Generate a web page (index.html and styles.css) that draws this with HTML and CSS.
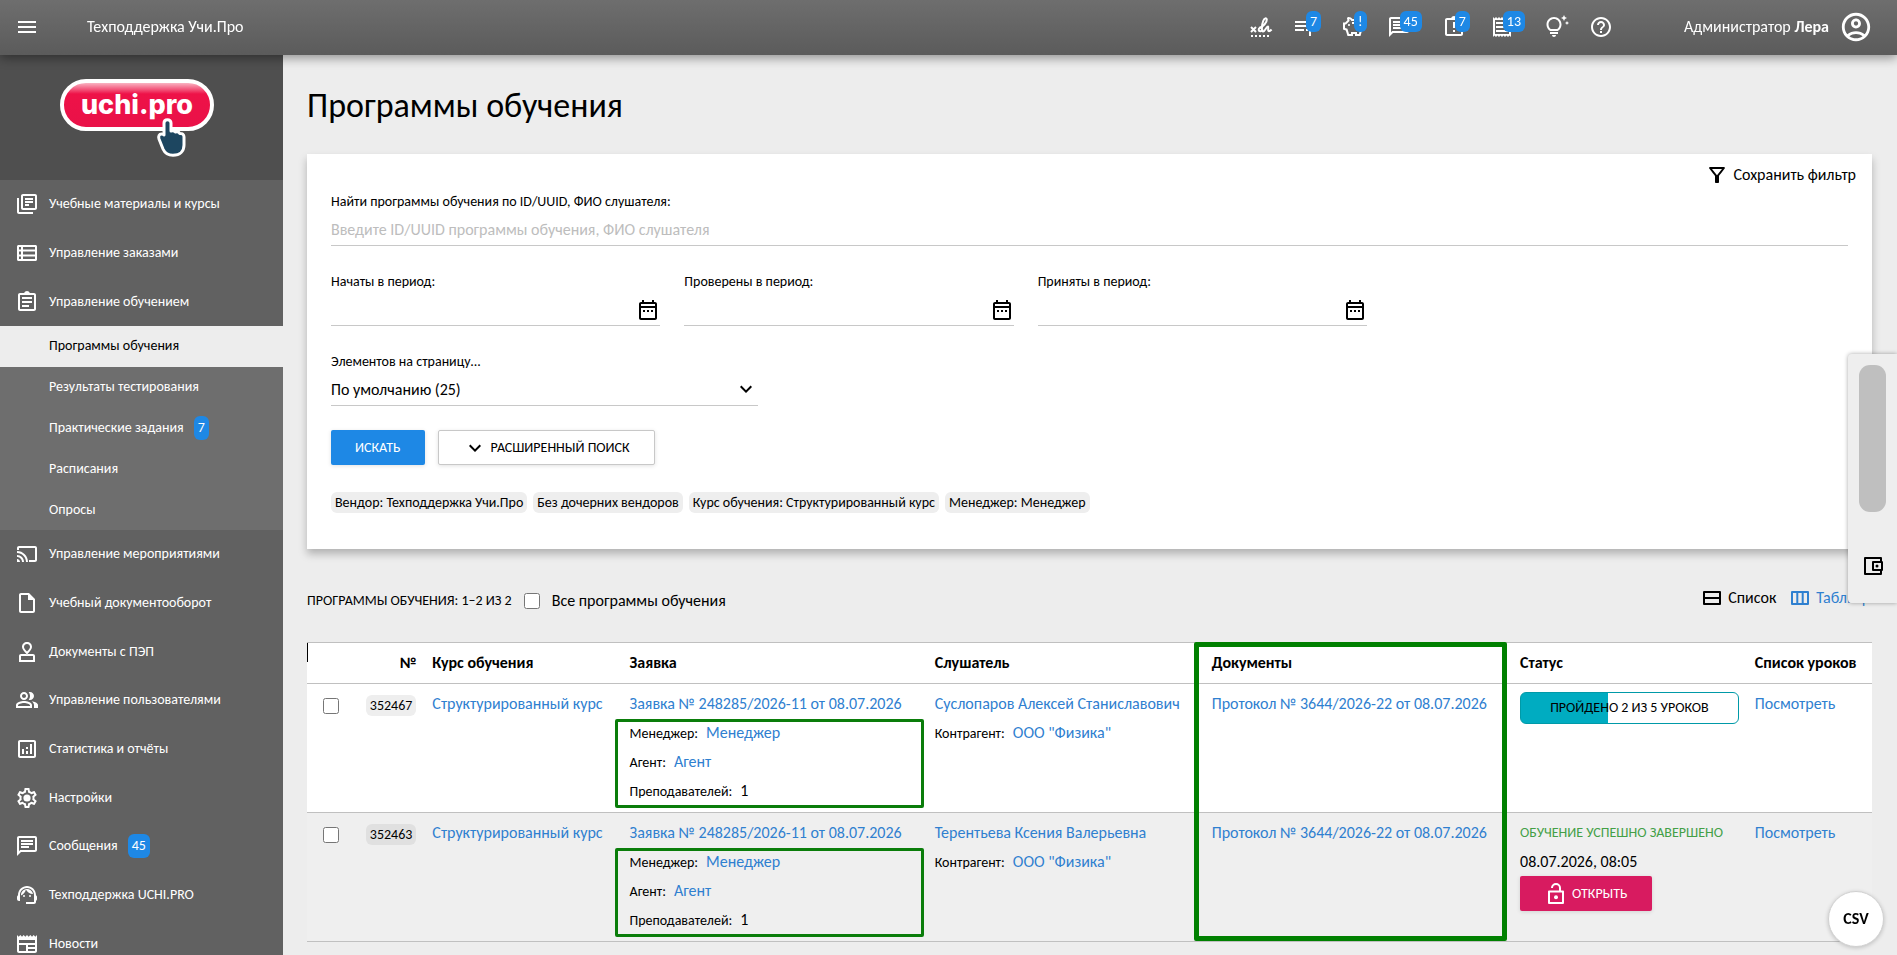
FILE: index.html
```html
<!DOCTYPE html>
<html lang="ru">
  <head>
    <meta charset="UTF-8">
    <meta name="viewport" content="width=device-width, initial-scale=1">
    <title>Программы обучения</title>
    <link rel="stylesheet" href="styles.css">
  </head>
  <body>
    <!-- Набор иконок -->
    <svg class="sprite" aria-hidden="true">
      <symbol id="i-menu" viewBox="0 0 24 24"><path d="M3 18h18v-2H3v2zm0-5h18v-2H3v2zm0-7v2h18V6H3z"/></symbol>
      <symbol id="i-books" viewBox="0 0 24 24"><path d="M4 6H2v14c0 1.1.9 2 2 2h14v-2H4V6zm16-4H8c-1.1 0-2 .9-2 2v12c0 1.1.9 2 2 2h12c1.1 0 2-.9 2-2V4c0-1.1-.9-2-2-2zm0 14H8V4h12v12zM10 9h8v2h-8zm0 3h4v2h-4zm0-6h8v2h-8z"/></symbol>
      <symbol id="i-list" viewBox="0 0 24 24"><path d="M3.500 4h17c.8 0 1.500.7 1.500 1.500v13c0 .8-.7 1.500-1.500 1.500h-17c-.8 0-1.500-.7-1.500-1.500v-13C2 4.700 2.700 4 3.500 4zM4 6v2.500h2V6H4zm4 0v2.500h12V6H8zm-4 4.500v3h2v-3H4zm4 0v3h12v-3H8zm-4 5V18h2v-2.500H4zm4 0V18h12v-2.500H8z" fill-rule="evenodd"/></symbol>
      <symbol id="i-assignment" viewBox="0 0 24 24"><path fill-rule="evenodd" d="M7 15h7v2H7zm0-4h10v2H7zm0-4h10v2H7zm12-4h-4.180C14.400 1.840 13.300 1 12 1c-1.300 0-2.400.84-2.820 2H5c-1.100 0-2 .9-2 2v14c0 1.100.9 2 2 2h14c1.100 0 2-.9 2-2V5c0-1.100-.9-2-2-2zm0 16H5V5h14v14z"/></symbol>
      <symbol id="i-late" viewBox="0 0 24 24"><path fill-rule="evenodd" d="M11 15h2v2h-2zm0-8h2v6h-2zm8-4h-4.180C14.400 1.840 13.300 1 12 1c-1.300 0-2.400.84-2.820 2H5c-1.100 0-2 .9-2 2v14c0 1.100.9 2 2 2h14c1.100 0 2-.9 2-2V5c0-1.100-.9-2-2-2zm0 16H5V5h14v14z"/></symbol>
      <symbol id="i-cast" viewBox="0 0 24 24"><path d="M20 4H4c-1.100 0-2 .9-2 2v2h2V6h16v12h-6v2h6c1.100 0 2-.9 2-2V6c0-1.100-.9-2-2-2zM2 17v3h3c0-1.660-1.340-3-3-3zm0-4v2c2.760 0 5 2.240 5 5h2c0-3.870-3.130-7-7-7zm0-4v2c4.970 0 9 4.030 9 9h2c0-6.080-4.920-11-11-11z"/></symbol>
      <symbol id="i-file" viewBox="0 0 24 24"><path d="M14 2H6c-1.100 0-1.990.9-1.990 2L4 20c0 1.100.89 2 1.990 2H18c1.100 0 2-.9 2-2V8l-6-6zM6 20V4h7v5h5v11H6z"/></symbol>
      <symbol id="i-stamp" viewBox="0 0 24 24"><path fill-rule="evenodd" d="M6 14h12c1.100 0 2 .9 2 2v6H4v-6c0-1.100.9-2 2-2zm0 2v4h12v-4H6zM12 2c2.800 0 5 2.100 5 4.900 0 2-1.900 4.300-5 7.600-3.100-3.300-5-5.600-5-7.600C7 4.100 9.200 2 12 2zm0 2c-1.700 0-3 1.300-3 2.900 0 1.100 1.100 2.700 3 4.700 1.900-2 3-3.600 3-4.700C15 5.300 13.700 4 12 4z"/></symbol>
      <symbol id="i-people" viewBox="0 0 24 24"><path d="M16.670 13.130C18.040 14.060 19 15.320 19 17v3h4v-3c0-2.180-3.570-3.470-6.330-3.870zM15 12c2.210 0 4-1.790 4-4s-1.790-4-4-4c-.47 0-.91.1-1.330.24C14.500 5.270 15 6.580 15 8s-.5 2.730-1.330 3.760c.42.14.86.24 1.330.24zM9 12c2.210 0 4-1.790 4-4s-1.790-4-4-4-4 1.790-4 4 1.790 4 4 4zm0-6c1.100 0 2 .9 2 2s-.9 2-2 2-2-.9-2-2 .9-2 2-2zM9 13c-2.670 0-8 1.340-8 4v3h16v-3c0-2.660-5.330-4-8-4zm6 5H3v-.99C3.200 16.290 6.300 15 9 15s5.800 1.290 6 2v1z"/></symbol>
      <symbol id="i-chart" viewBox="0 0 24 24"><path d="M19 3H5c-1.100 0-2 .9-2 2v14c0 1.100.9 2 2 2h14c1.100 0 2-.9 2-2V5c0-1.100-.9-2-2-2zm0 16H5V5h14v14zM7 12h2v5H7zm8-5h2v10h-2zm-4 7h2v3h-2zm0-4h2v2h-2z"/></symbol>
      <symbol id="i-settings" viewBox="0 0 24 24"><path d="M19.43 12.98c.04-.32.07-.64.07-.98s-.03-.66-.07-.98l2.11-1.65c.19-.15.24-.42.12-.64l-2-3.46c-.09-.16-.26-.25-.44-.25-.06 0-.12.01-.17.03l-2.49 1c-.52-.4-1.08-.73-1.69-.98l-.38-2.65C14.46 2.18 14.25 2 14 2h-4c-.25 0-.46.18-.49.42l-.38 2.65c-.61.25-1.17.59-1.69.98l-2.49-1c-.06-.02-.12-.03-.18-.03-.17 0-.34.09-.43.25l-2 3.46c-.13.22-.07.49.12.64l2.11 1.65c-.04.32-.07.65-.07.98s.03.66.07.98l-2.11 1.65c-.19.15-.24.42-.12.64l2 3.46c.09.16.26.25.44.25.06 0 .12-.01.17-.03l2.49-1c.52.4 1.08.73 1.69.98l.38 2.65c.03.24.24.42.49.42h4c.25 0 .46-.18.49-.42l.38-2.65c.61-.25 1.17-.59 1.69-.98l2.49 1c.06.02.12.03.18.03.17 0 .34-.09.43-.25l2-3.46c.12-.22.07-.49-.12-.64l-2.11-1.65zm-1.98-1.71c.04.31.05.52.05.73s-.02.43-.05.73l-.14 1.13.89.7 1.08.84-.7 1.21-1.27-.51-1.04-.42-.9.68c-.43.32-.84.56-1.25.73l-1.06.43-.16 1.13-.2 1.35h-1.4l-.19-1.35-.16-1.13-1.06-.43c-.43-.18-.83-.41-1.23-.71l-.91-.7-1.06.43-1.27.51-.7-1.21 1.08-.84.89-.7-.14-1.13c-.03-.31-.05-.54-.05-.74s.02-.43.05-.73l.14-1.13-.89-.7-1.08-.84.7-1.21 1.27.51 1.04.42.9-.68c.43-.32.84-.56 1.25-.73l1.06-.43.16-1.13.2-1.35h1.39l.19 1.35.16 1.13 1.06.43c.43.18.83.41 1.23.71l.91.7 1.06-.43 1.27-.51.7 1.21-1.07.85-.89.7.14 1.13z"/><circle cx="12" cy="12" r="3.600"/></symbol>
      <symbol id="i-chat" viewBox="0 0 24 24"><path d="M4 4h16v12H5.170L4 17.170V4m0-2c-1.100 0-1.990.9-1.990 2L2 22l4-4h14c1.100 0 2-.9 2-2V4c0-1.100-.9-2-2-2H4zm2 10h8v2H6v-2zm0-3h12v2H6V9zm0-3h12v2H6V6z"/></symbol>
      <symbol id="i-support" viewBox="0 0 24 24"><path d="M21 12.220C21 6.730 16.740 3 12 3c-4.690 0-9 3.650-9 9.280-.6.34-1 .98-1 1.720v2c0 1.100.9 2 2 2h1v-6.100c0-3.870 3.130-7 7-7s7 3.130 7 7V19h-8v2h8c1.100 0 2-.9 2-2v-1.220c.59-.31 1-.92 1-1.640v-2.300c0-.7-.41-1.310-1-1.620z"/><circle cx="9" cy="13" r="1"/><circle cx="15" cy="13" r="1"/><path d="M18 11.030C17.520 8.180 15.040 6 12.050 6c-3.030 0-6.290 2.510-6.030 6.450 2.470-1.010 4.330-3.210 4.860-5.890 1.310 2.630 4 4.440 7.120 4.470z"/></symbol>
      <symbol id="i-news" viewBox="0 0 24 24"><path d="M22 3l-1.670 1.670L18.670 3 17 4.670 15.330 3l-1.660 1.670L12 3l-1.670 1.670L8.670 3 7 4.670 5.330 3 3.670 4.670 2 3v16c0 1.100.9 2 2 2h16c1.100 0 2-.9 2-2V3zM11 19H4v-6h7v6zm9 0h-7v-2h7v2zm0-4h-7v-2h7v2zm0-4H4V8h16v3z"/></symbol>
      <symbol id="i-sign" viewBox="0 0 24 24"><g fill="none" stroke="currentColor" stroke-width="2"><path d="M2 12l5 5M7 12l-5 5"/><path d="M10 13c4-1 8-5.500 7.800-8.500-.2-2-2.500-1.500-3.600 1.500-1.400 3.800-2.200 10-.2 10.500 2 .3 3.500-5.500 5-5 1 .4-.8 4.800 1 4.800 1 0 1.800-.9 2.600-1.800"/><path d="M14 12.500c-2-.6-4.500.7-4.300 2.500.3 2 3.300 1.500 4.300-.5"/><path d="M2 21h20" stroke-dasharray="2 2"/></g></symbol>
      <symbol id="i-playlist" viewBox="0 0 24 24"><path d="M14 10H2v2h12v-2zm0-4H2v2h12V6zm4 8v-4h-2v4h-3v2h3v5h2v-5h4v-2h-4zM2 16h9v-2H2v2z"/></symbol>
      <symbol id="i-savings" viewBox="0 0 24 24"><path transform="matrix(-1 0 0 1 24 0)" d="M15 10c0-.55.45-1 1-1s1 .45 1 1-.45 1-1 1-1-.45-1-1zM8 9h5V7H8v2zm14-1.500v6.970l-2.820.94L17.500 21H12v-2h-2v2H4.500S2 12.540 2 9.500 4.460 4 7.500 4h5c.91-1.210 2.360-2 4-2 .83 0 1.500.67 1.500 1.500 0 .21-.04.4-.12.58-.14.34-.26.73-.32 1.150l2.270 2.270H22zm-2 2h-1L15.500 6c0-.65.09-1.290.26-1.910-.97.25-1.760.97-2.090 1.910H7.500C5.570 6 4 7.570 4 9.500c0 1.880 1.220 6.650 2.010 9.500H8v-2h6v2h2.010l1.550-5.150 2.440-.82V9.500z"/></symbol>
      <symbol id="i-receipt" viewBox="0 0 24 24"><path d="M19.500 3.500L18 2l-1.500 1.500L15 2l-1.500 1.500L12 2l-1.500 1.500L9 2 7.500 3.500 6 2 4.500 3.500 3 2v20l1.500-1.500L6 22l1.500-1.500L9 22l1.500-1.500L12 22l1.500-1.500L15 22l1.500-1.500L18 22l1.500-1.500L21 22V2l-1.500 1.500zM19 19.090H5V4.910h14v14.180zM6 15h12v2H6zm0-4h12v2H6zm0-4h12v2H6z"/></symbol>
      <symbol id="i-tips" viewBox="0 0 24 24"><path d="M7 20h4c0 1.100-.9 2-2 2s-2-.9-2-2zm-2-1h8v-2H5v2zm11.500-9.500c0 3.820-2.660 5.860-3.770 6.500H5.270C4.160 15.360 1.500 13.320 1.500 9.500 1.500 5.360 4.860 2 9 2s7.500 3.360 7.500 7.500zm-2 0C14.500 6.470 12.030 4 9 4S3.500 6.470 3.500 9.500c0 2.470 1.490 3.890 2.350 4.500h6.300c.86-.61 2.350-2.030 2.350-4.500zm6.870-2.130L20 8l1.370.63L22 10l.63-1.370L24 8l-1.370-.63L22 6l-.63 1.370zM19 6l.94-2.060L22 3l-2.060-.94L19 0l-.94 2.060L16 3l2.060.94L19 6z"/></symbol>
      <symbol id="i-help" viewBox="0 0 24 24"><path d="M11 18h2v-2h-2v2zm1-16C6.480 2 2 6.480 2 12s4.480 10 10 10 10-4.480 10-10S17.520 2 12 2zm0 18c-4.410 0-8-3.590-8-8s3.590-8 8-8 8 3.590 8 8-3.590 8-8 8zm0-14c-2.210 0-4 1.790-4 4h2c0-1.100.9-2 2-2s2 .9 2 2c0 2-3 1.750-3 5h2c0-2.250 3-2.500 3-5 0-2.210-1.790-4-4-4z"/></symbol>
      <symbol id="i-account" viewBox="0 0 24 24"><path d="M12 2C6.480 2 2 6.480 2 12s4.480 10 10 10 10-4.480 10-10S17.520 2 12 2zM7.350 18.500C8.660 17.560 10.260 17 12 17s3.340.56 4.650 1.500C15.340 19.440 13.740 20 12 20s-3.340-.56-4.650-1.500zm10.790-1.380C16.450 15.800 14.320 15 12 15s-4.450.8-6.140 2.120C4.700 15.730 4 13.950 4 12c0-4.420 3.580-8 8-8s8 3.580 8 8c0 1.950-.7 3.730-1.860 5.120zM12 6c-1.930 0-3.500 1.570-3.500 3.500S10.070 13 12 13s3.500-1.570 3.500-3.500S13.930 6 12 6zm0 5c-.83 0-1.500-.67-1.500-1.500S11.170 8 12 8s1.500.67 1.500 1.500S12.830 11 12 11z"/></symbol>
      <symbol id="i-filter" viewBox="0 0 24 24"><path d="M7 6h10l-5.010 6.300L7 6zm-2.750-.39C6.270 8.200 10 13 10 13v6c0 .55.45 1 1 1h2c.55 0 1-.45 1-1v-6s3.720-4.800 5.740-7.390c.51-.66.04-1.610-.79-1.610H5.040c-.83 0-1.300.95-.79 1.610z"/></symbol>
      <symbol id="i-calendar" viewBox="0 0 24 24"><path d="M7 12h2v2H7v-2zm14-6v14c0 1.100-.9 2-2 2H5c-1.110 0-2-.9-2-2l.01-14c0-1.100.88-2 1.990-2h1V2h2v2h8V2h2v2h1c1.100 0 2 .9 2 2zM5 8h14V6H5v2zm14 12V10H5v10h14zm-4-6h2v-2h-2v2zm-4 0h2v-2h-2v2z"/></symbol>
      <symbol id="i-down" viewBox="0 0 24 24"><path d="M16.590 8.590L12 13.170 7.410 8.590 6 10l6 6 6-6z"/></symbol>
      <symbol id="i-rows" viewBox="0 0 24 24"><path fill="none" stroke="currentColor" stroke-width="2" stroke-linejoin="round" d="M4 6h16v12H4zM4 12h16"/></symbol>
      <symbol id="i-columns" viewBox="0 0 24 24"><path fill="none" stroke="currentColor" stroke-width="2" stroke-linejoin="round" d="M4 6h16v12H4zM9.300 6v12M14.700 6v12"/></symbol>
      <symbol id="i-wallet" viewBox="0 0 24 24"><path fill="none" stroke="currentColor" stroke-width="2" stroke-linejoin="round" d="M20 8V4H4v16h16v-4M12 8h9v8h-9z"/><circle cx="16" cy="12" r="1.500"/></symbol>
      <symbol id="i-unlock" viewBox="0 0 24 24"><path fill="none" stroke="currentColor" stroke-width="2" stroke-linejoin="round" d="M5 9.500h14V21H5zM8 6c0-2.200 1.800-4 4-4s4 1.800 4 4v3.500"/><circle cx="12" cy="15.300" r="2"/></symbol>
    </svg>

    <header class="topbar">
      <button class="icon-button" aria-label="Меню"><svg class="icon"><use href="#i-menu"/></svg></button>
      <span class="topbar-title">Техподдержка Учи.Про</span>
      <nav class="topbar-actions" aria-label="Уведомления">
        <button class="icon-button" aria-label="Подписи"><svg class="icon"><use href="#i-sign"/></svg></button>
        <button class="icon-button" aria-label="Заявки"><svg class="icon"><use href="#i-playlist"/></svg><span class="badge">7</span></button>
        <button class="icon-button" aria-label="Баланс"><svg class="icon"><use href="#i-savings"/></svg><span class="badge">!</span></button>
        <button class="icon-button" aria-label="Сообщения"><svg class="icon"><use href="#i-chat"/></svg><span class="badge">45</span></button>
        <button class="icon-button" aria-label="Задания"><svg class="icon"><use href="#i-late"/></svg><span class="badge">7</span></button>
        <button class="icon-button" aria-label="Счета"><svg class="icon"><use href="#i-receipt"/></svg><span class="badge">13</span></button>
        <button class="icon-button" aria-label="Советы"><svg class="icon"><use href="#i-tips"/></svg></button>
        <button class="icon-button" aria-label="Помощь"><svg class="icon"><use href="#i-help"/></svg></button>
      </nav>
      <button class="profile">
        <span>Администратор <b>Лера</b></span>
        <svg class="icon icon-large"><use href="#i-account"/></svg>
      </button>
    </header>

    <div class="layout">
      <aside class="sidebar">
        <a class="logo" href="#">
          <svg width="154" height="78" viewBox="0 0 154 78" role="img" aria-label="uchi.pro">
            <defs>
              <linearGradient id="pill" x1="0" y1="0" x2="0" y2="1">
                <stop offset="0" stop-color="#fbd0d8"/>
                <stop offset=".27" stop-color="#ee1248"/>
                <stop offset="1" stop-color="#e91148"/>
              </linearGradient>
            </defs>
            <rect x="2" y="2" width="150" height="48" rx="24" fill="url(#pill)" stroke="#fff" stroke-width="4"/>
            <text class="logo-text" x="77" y="35" text-anchor="middle">uchi.pro</text>
            <path d="M104 44c0-2 1.500-3.200 3.500-3.200s3.500 1.400 3.500 3.200v8c2-.6 3.600 0 4.500 1 2-.6 3.500 0 4.300 1.400 2.400-.2 4.200 1 4.200 3.600v8c0 6-4 10.300-11 10.300-5 0-8-1.800-10-6.300l-4-10c-1-3 .4-5 2.400-5s2.600 1 2.600 1z" fill="#1d4660" stroke="#fff" stroke-width="3" stroke-linejoin="round"/>
          </svg>
        </a>
        <nav>
          <ul class="menu">
            <li><a href="#"><svg class="icon"><use href="#i-books"/></svg>Учебные материалы и курсы</a></li>
            <li><a href="#"><svg class="icon"><use href="#i-list"/></svg>Управление заказами</a></li>
            <li><a href="#"><svg class="icon"><use href="#i-assignment"/></svg>Управление обучением</a></li>
          </ul>
          <ul class="submenu">
            <li><a class="active" href="#">Программы обучения</a></li>
            <li><a href="#">Результаты тестирования</a></li>
            <li><a href="#">Практические задания<span class="badge badge-menu">7</span></a></li>
            <li><a href="#">Расписания</a></li>
            <li><a href="#">Опросы</a></li>
          </ul>
          <ul class="menu">
            <li><a href="#"><svg class="icon"><use href="#i-cast"/></svg>Управление мероприятиями</a></li>
            <li><a href="#"><svg class="icon"><use href="#i-file"/></svg>Учебный документооборот</a></li>
            <li><a href="#"><svg class="icon"><use href="#i-stamp"/></svg>Документы с ПЭП</a></li>
            <li><a href="#"><svg class="icon"><use href="#i-people"/></svg>Управление пользователями</a></li>
            <li><a href="#"><svg class="icon"><use href="#i-chart"/></svg>Статистика и отчёты</a></li>
            <li><a href="#"><svg class="icon"><use href="#i-settings"/></svg>Настройки</a></li>
            <li><a href="#"><svg class="icon"><use href="#i-chat"/></svg>Сообщения<span class="badge badge-menu">45</span></a></li>
            <li><a href="#"><svg class="icon"><use href="#i-support"/></svg>Техподдержка UCHI.PRO</a></li>
            <li><a href="#"><svg class="icon"><use href="#i-news"/></svg>Новости</a></li>
          </ul>
        </nav>
      </aside>

      <main class="content">
        <h1>Программы обучения</h1>

        <!-- Фильтр -->
        <section class="card">
          <div class="card-tools">
            <button class="text-button"><svg class="icon"><use href="#i-filter"/></svg>Сохранить фильтр</button>
          </div>
          <form class="filter">
            <div class="field">
              <label for="search">Найти программы обучения по ID/UUID, ФИО слушателя:</label>
              <input class="control" type="text" id="search" placeholder="Введите ID/UUID программы обучения, ФИО слушателя">
            </div>
            <div class="periods">
              <div class="field">
                <label for="started">Начаты в период:</label>
                <div class="control date-control">
                  <input type="text" id="started">
                  <button type="button" class="icon-button" aria-label="Выбрать период"><svg class="icon"><use href="#i-calendar"/></svg></button>
                </div>
              </div>
              <div class="field">
                <label for="checked">Проверены в период:</label>
                <div class="control date-control">
                  <input type="text" id="checked">
                  <button type="button" class="icon-button" aria-label="Выбрать период"><svg class="icon"><use href="#i-calendar"/></svg></button>
                </div>
              </div>
              <div class="field">
                <label for="accepted">Приняты в период:</label>
                <div class="control date-control">
                  <input type="text" id="accepted">
                  <button type="button" class="icon-button" aria-label="Выбрать период"><svg class="icon"><use href="#i-calendar"/></svg></button>
                </div>
              </div>
            </div>
            <div class="field field-select">
              <label for="per-page">Элементов на страницу...</label>
              <div class="select-box">
                <select class="control" id="per-page">
                  <option>По умолчанию (25)</option>
                </select>
                <svg class="icon"><use href="#i-down"/></svg>
              </div>
            </div>
            <div class="buttons">
              <button type="submit" class="button button-primary">Искать</button>
              <button type="button" class="button button-outline"><svg class="icon"><use href="#i-down"/></svg>Расширенный поиск</button>
            </div>
            <div class="chips">
              <span class="chip">Вендор: Техподдержка Учи.Про</span>
              <span class="chip">Без дочерних вендоров</span>
              <span class="chip">Курс обучения: Структурированный курс</span>
              <span class="chip">Менеджер: Менеджер</span>
            </div>
          </form>
        </section>

        <!-- Список программ -->
        <div class="list-head">
          <span class="counter">Программы обучения: 1–2 из 2</span>
          <input type="checkbox" id="all">
          <label for="all">Все программы обучения</label>
          <div class="views">
            <button class="text-button"><svg class="icon"><use href="#i-rows"/></svg>Список</button>
            <button class="text-button current"><svg class="icon"><use href="#i-columns"/></svg>Таблица</button>
          </div>
        </div>

        <div class="table-wrap">
          <table>
            <thead>
              <tr>
                <th class="col-check"></th>
                <th class="col-id">№</th>
                <th class="col-course">Курс обучения</th>
                <th class="col-order">Заявка</th>
                <th class="col-student">Слушатель</th>
                <th class="col-docs">Документы</th>
                <th class="col-status">Статус</th>
                <th class="col-lessons">Список уроков</th>
              </tr>
            </thead>
            <tbody>
              <tr>
                <td class="col-check"><input type="checkbox" aria-label="Выбрать 352467"></td>
                <td class="col-id"><span class="chip">352467</span></td>
                <td><a href="#">Структурированный курс</a></td>
                <td>
                  <a href="#">Заявка № 248285/2026-11 от 08.07.2026</a>
                  <div class="details marked">
                    <div><span class="caption">Менеджер:</span><a href="#">Менеджер</a></div>
                    <div><span class="caption">Агент:</span><a href="#">Агент</a></div>
                    <div><span class="caption">Преподавателей:</span>1</div>
                  </div>
                </td>
                <td>
                  <a href="#">Суслопаров Алексей Станиславович</a>
                  <div class="details">
                    <div><span class="caption">Контрагент:</span><a href="#">ООО "Физика"</a></div>
                  </div>
                </td>
                <td><a href="#">Протокол № 3644/2026-22 от 08.07.2026</a></td>
                <td class="col-progress"><div class="progress">Пройдено 2 из 5 уроков</div></td>
                <td><a href="#">Посмотреть</a></td>
              </tr>
              <tr>
                <td class="col-check"><input type="checkbox" aria-label="Выбрать 352463"></td>
                <td class="col-id"><span class="chip">352463</span></td>
                <td><a href="#">Структурированный курс</a></td>
                <td>
                  <a href="#">Заявка № 248285/2026-11 от 08.07.2026</a>
                  <div class="details marked">
                    <div><span class="caption">Менеджер:</span><a href="#">Менеджер</a></div>
                    <div><span class="caption">Агент:</span><a href="#">Агент</a></div>
                    <div><span class="caption">Преподавателей:</span>1</div>
                  </div>
                </td>
                <td>
                  <a href="#">Терентьева Ксения Валерьевна</a>
                  <div class="details">
                    <div><span class="caption">Контрагент:</span><a href="#">ООО "Физика"</a></div>
                  </div>
                </td>
                <td><a href="#">Протокол № 3644/2026-22 от 08.07.2026</a></td>
                <td>
                  <div class="done">Обучение успешно завершено</div>
                  <div class="details">08.07.2026, 08:05</div>
                  <button class="button button-danger"><svg class="icon"><use href="#i-unlock"/></svg>Открыть</button>
                </td>
                <td><a href="#">Посмотреть</a></td>
              </tr>
            </tbody>
          </table>
          <div class="docs-mark"></div>
        </div>
      </main>
    </div>

    <div class="side-panel">
      <div class="side-thumb"></div>
      <button class="icon-button" aria-label="Кошелёк"><svg class="icon"><use href="#i-wallet"/></svg></button>
    </div>
    <button class="csv-button">CSV</button>
  </body>
</html>
```

FILE: styles.css
```css
* {
  box-sizing: border-box;
}

body {
  margin: 0;
  font-family: "Carlito", "Lato", "Open Sans", sans-serif;
  font-size: 16px;
  line-height: 20px;
  color: #000;
  background: #ededed;
}

button, input, select {
  font: inherit;
  color: inherit;
}

button {
  border: none;
  background: none;
  padding: 0;
  cursor: pointer;
}

a {
  color: #2f80d0;
  text-decoration: none;
}

ul {
  list-style: none;
  margin: 0;
  padding: 0;
}

.sprite {
  display: none;
}

.icon {
  display: block;
  width: 24px;
  height: 24px;
  flex: none;
  fill: currentColor;
}

.icon-large {
  width: 34px;
  height: 34px;
}

.icon-button {
  display: flex;
}

/* Верхняя панель */
.topbar {
  position: sticky;
  top: 0;
  z-index: 5;
  display: flex;
  align-items: center;
  height: 55px;
  padding: 0 24px 1px 15px;
  color: #fff;
  background: linear-gradient(#6e6e6e, #5b5b5b);
  box-shadow: 0 3px 10px rgba(0, 0, 0, 0.4);
}

.topbar-title {
  margin-left: 48px;
}

.topbar-actions {
  display: flex;
  gap: 20px;
  margin-left: auto;
}

.badge {
  z-index: 1;
  height: 21px;
  padding: 0 4px;
  border-radius: 6px;
  background: #1e88e5;
  color: #fff;
  font-size: 14px;
  line-height: 21px;
}

.topbar .badge {
  align-self: flex-start;
  margin: -4px 0 0 -11px;
}

.topbar .icon-button {
  height: 24px;
}

.badge-menu {
  height: 24px;
  margin-left: 10px;
  line-height: 24px;
}

.profile {
  display: flex;
  align-items: center;
  gap: 10px;
  margin-left: 71px;
}

.layout {
  display: flex;
  height: calc(100vh - 55px);
}

/* Боковое меню */
.sidebar {
  flex: none;
  width: 283px;
  overflow-y: auto;
  scrollbar-width: none;
  background: #616161;
  font-size: 14px;
}

.logo {
  display: flex;
  justify-content: center;
  height: 125px;
  padding: 24px 9px 0 0;
  background: #4f4f4f;
}

.logo-text {
  font-family: "Inter", sans-serif;
  font-size: 27px;
  font-weight: 800;
  fill: #fff;
}

.menu a, .submenu a {
  display: flex;
  align-items: center;
  height: 49px;
  padding-bottom: 1px;
  color: #fff;
}

.menu a {
  gap: 10px;
  padding-left: 15px;
}

.menu li:nth-child(3n) a {
  height: 48px;
}

.menu .badge-menu {
  margin: 0;
}

.submenu {
  background: #6e6e6e;
}

.submenu a {
  height: 41px;
  padding-left: 49px;
}

.submenu li:last-child a {
  height: 40px;
}

.submenu .active {
  background: #ededed;
  color: #000;
}

/* Основная часть */
.content {
  flex: 1;
  min-width: 0;
  padding: 31px 25px 0 24px;
  overflow: hidden;
}

h1 {
  margin: 0 0 28px;
  font-size: 34px;
  font-weight: normal;
  line-height: 40px;
}

.card {
  padding: 10px 16px 36px;
  background: #fff;
  box-shadow: 0 5px 8px rgba(0, 0, 0, 0.25);
}

.card-tools {
  display: flex;
  justify-content: flex-end;
  margin-bottom: 6px;
}

.text-button {
  display: flex;
  align-items: center;
  gap: 4px;
  height: 22px;
}

.filter {
  padding: 0 8px;
}

.field {
  margin-bottom: 26px;
}

.field label {
  display: block;
  font-size: 14px;
}

.control {
  display: block;
  width: 100%;
  height: 34px;
  padding: 2px 0 0;
  border: none;
  border-bottom: 1px solid #c8c8c8;
  border-radius: 0;
  outline: none;
  background: none;
}

.control::placeholder {
  color: #bdbdbd;
}

.periods {
  display: grid;
  grid-template-columns: repeat(3, 1fr);
  gap: 24px;
  max-width: 1036px;
}

.date-control {
  display: flex;
  align-items: center;
}

.date-control input {
  flex: 1;
  min-width: 0;
  border: none;
  outline: none;
  background: none;
}

.field-select {
  max-width: 427px;
  margin-bottom: 24px;
}

.select-box {
  display: grid;
  align-items: center;
  justify-items: end;
}

.select-box > * {
  grid-area: 1 / 1;
}

.select-box select {
  appearance: none;
}

.select-box .icon {
  pointer-events: none;
}

.buttons {
  display: flex;
  gap: 13px;
}

.button {
  display: flex;
  align-items: center;
  justify-content: center;
  height: 35px;
  padding: 0 24px;
  border-radius: 2px;
  box-shadow: 0 1px 4px rgba(0, 0, 0, 0.12);
  font-size: 14px;
  text-transform: uppercase;
}

.button-primary {
  background: #1e88e5;
  color: #fff;
}

.button-outline {
  gap: 4px;
  border: 1px solid #c8c8c8;
  background: #fff;
}

.button-danger {
  gap: 4px;
  background: #d81b60;
  color: #fff;
}

.chips {
  display: flex;
  flex-wrap: wrap;
  gap: 6px;
  margin-top: 27px;
}

.chip {
  display: inline-block;
  padding: 0 4px;
  border-radius: 6px;
  background: #eee;
  font-size: 14px;
  line-height: 21px;
}

/* Шапка списка */
.list-head {
  display: flex;
  align-items: center;
  height: 24px;
  margin: 40px 0 29px;
}

.list-head label {
  margin-left: 12px;
}

.counter {
  margin-right: 12px;
  font-size: 14px;
  text-transform: uppercase;
}

input[type="checkbox"] {
  width: 16px;
  height: 16px;
  margin: 0;
}

.views {
  display: flex;
  gap: 12px;
  margin: 0 0 6px auto;
}

.current {
  color: #2f80d0;
}

/* Таблица */
.table-wrap {
  position: relative;
}

table {
  width: 100%;
  table-layout: fixed;
  border-collapse: separate;
  border-spacing: 0;
  border-top: 1px solid #c0c0c0;
}

th, td {
  padding: 10px 8px 7px;
  border-bottom: 1px solid #c0c0c0;
  text-align: left;
  vertical-align: top;
  white-space: nowrap;
}

th {
  padding-bottom: 10px;
}

tr {
  background: #fff;
}

tbody tr:nth-child(even) {
  background: #efefef;
}

tbody tr:nth-child(even) .chip {
  background: #e0e0e0;
}

.col-check {
  width: 3.2%;
  padding: 14px 16px 0;
  line-height: 16px;
}

td.col-check input {
  display: block;
}

/* Курсор в первой ячейке */
th.col-check {
  padding: 0;
}

th.col-check::before {
  content: "";
  display: block;
  width: 1px;
  height: 19px;
  background: #000;
}

.col-id {
  width: 4.3%;
  text-align: right;
}

td.col-id {
  padding-top: 11px;
}

.col-course {
  width: 12.6%;
}

.col-order {
  width: 19.5%;
}

.col-student {
  width: 17.7%;
}

.col-docs {
  width: 19.7%;
}

.col-status {
  width: 15%;
}

.details {
  position: relative;
  margin-top: 4px;
  line-height: 29px;
}

.caption {
  margin-right: 8px;
  font-size: 14px;
  line-height: 20px;
}

/* Зелёные рамки поверх таблицы */
.marked::before {
  content: "";
  position: absolute;
  inset: 1px -5px -3px -15px;
  border: 3px solid #0a7d0a;
  border-radius: 2px;
  pointer-events: none;
}

.docs-mark {
  position: absolute;
  top: 0;
  bottom: 1px;
  left: 56.7%;
  width: 20%;
  border: 5px solid #008000;
  border-radius: 2px;
  pointer-events: none;
}

td.col-progress {
  padding-top: 8px;
}

.progress {
  height: 32px;
  border: 1px solid #009aa8;
  border-radius: 6px;
  background: linear-gradient(to right, #00acc1 40%, #fff 40%);
  font-size: 14px;
  line-height: 30px;
  text-align: center;
  text-transform: uppercase;
}

.done {
  color: #43a047;
  font-size: 14px;
  text-transform: uppercase;
}

/* Плавающие элементы */
.side-panel {
  position: fixed;
  top: 354px;
  right: 0;
  z-index: 3;
  display: flex;
  flex-direction: column;
  align-items: center;
  gap: 42px;
  width: 49px;
  padding: 11px 11px 25px;
  border-radius: 4px 0 0 4px;
  background: #eee;
  box-shadow: 0 0 4px rgba(0, 0, 0, 0.35);
}

.side-thumb {
  width: 27px;
  height: 147px;
  border-radius: 11px;
  background: #bfbfbf;
}

.csv-button {
  position: fixed;
  right: 13px;
  bottom: 8px;
  z-index: 3;
  width: 56px;
  height: 56px;
  border: 1px solid #d0d0d0;
  border-radius: 50%;
  background: #fff;
  box-shadow: 0 1px 4px rgba(0, 0, 0, 0.2);
  font-weight: bold;
}
```
